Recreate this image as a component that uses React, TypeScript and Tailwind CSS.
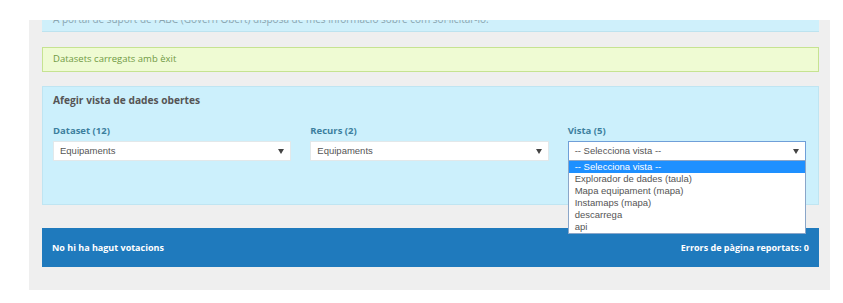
const vistes = [
  '-- Selecciona vista --',
  'Explorador de dades (taula)',
  'Mapa equipament (mapa)',
  'Instamaps (mapa)',
  'descarrega',
  'api',
]

const Arrow = () => (
  <svg width="6" height="5" viewBox="0 0 6 5" className="shrink-0">
    <path d="M0 0 H6 L3 5 Z" fill="#444" />
  </svg>
)

type SelectProps = {
  value: string
  focused?: boolean
}

const FakeSelect = (props: SelectProps) => (
  <div
    className={
      props.focused
        ? 'flex h-[20px] items-center justify-between bg-white border border-[#6f9fd8] pl-[6px] pr-[6px]'
        : 'flex h-[20px] items-center justify-between bg-white border border-[#e2e8ea] pl-[6px] pr-[6px]'
    }
  >
    <span className="text-[9.5px] text-[#555] font-['Liberation_Sans',Arial,sans-serif]">{props.value}</span>
    <Arrow />
  </div>
)

const App = () => {
  return (
    <div className="w-[843px] h-[303px] bg-white pt-[20px] font-['Open_Sans',sans-serif]">
      <div className="ml-[29px] w-[801px] h-[270px] bg-[#efefef] pl-[13px]">
        <div className="w-[777px]">
          {/* info box, top cut off by the page above */}
          <div className="h-[12px] overflow-hidden bg-[#cff0fb] border-b border-[#bde3ef]">
            <p className="-mt-[8px] pl-[11px] text-[10px] leading-[14px] text-[#8aa5b0]">
              A portal de suport de l'ABC (Govern Obert) disposa de més informació sobre com sol·licitar-lo.
            </p>
          </div>

          <div className="mt-[15px] h-[25px] flex items-center bg-[#effbd3] border border-[#c6e391] pl-[10px]">
            <span className="text-[9.5px] text-[#6f9a44]">Datasets carregats amb èxit</span>
          </div>

          <div className="mt-[14px] h-[119px] bg-[#ccf0fc] border border-[#bfe5f2] pl-[10px] pr-[12px] pt-[6px]">
            <h2 className="text-[10.2px] leading-[14px] font-bold text-[#555]">Afegir vista de dades obertes</h2>
            <div className="mt-[17px] grid grid-cols-3 gap-x-[19px]">
              <div>
                <div className="text-[9.5px] leading-[14px] font-bold text-[#3c7f9e] mb-[3px]">Dataset (12)</div>
                <FakeSelect value="Equipaments" />
              </div>
              <div>
                <div className="text-[9.5px] leading-[14px] font-bold text-[#3c7f9e] mb-[3px]">Recurs (2)</div>
                <FakeSelect value="Equipaments" />
              </div>
              <div className="relative">
                <div className="text-[9.5px] leading-[14px] font-bold text-[#3c7f9e] mb-[3px]">Vista (5)</div>
                <div className="relative">
                  <FakeSelect value="-- Selecciona vista --" focused />
                  <div className="absolute left-0 right-0 top-[19px] z-10 bg-white border border-[#8aa6c9] font-['Liberation_Sans',Arial,sans-serif]">
                    {vistes.map((v, i) => (
                      <div
                        key={v}
                        className={
                          i === 0
                            ? 'h-[12px] leading-[12px] pl-[6px] text-[9.5px] bg-[#1e90ff] text-white'
                            : 'h-[12px] leading-[12px] pl-[6px] text-[9.5px] text-[#555]'
                        }
                      >
                        {v}
                      </div>
                    ))}
                  </div>
                </div>
                <div className="flex justify-end mt-[13px]">
                  <button className="h-[23px] w-[66px] bg-[#f5f5f5] border border-[#b8c4c9] text-[10px] text-[#555]">
                    Afegir
                  </button>
                </div>
              </div>
            </div>
          </div>

          <div className="mt-[23px] h-[39px] flex items-center justify-between bg-[#1f7abd] pl-[10px] pr-[10px]">
            <span className="text-[9px] font-bold text-white">No hi ha hagut votacions</span>
            <span className="text-[9px] font-bold text-white">Errors de pàgina reportats: 0</span>
          </div>
        </div>
      </div>
    </div>
  )
}

export default App
